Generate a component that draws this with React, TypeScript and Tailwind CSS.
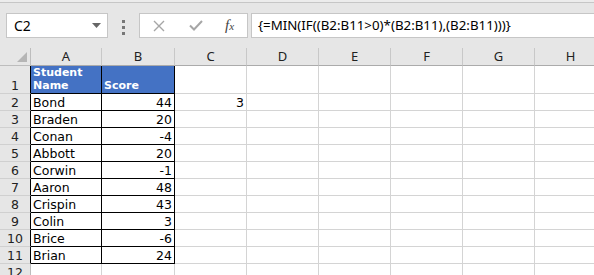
import React from 'react';

const cols = ['A', 'B', 'C', 'D', 'E', 'F', 'G', 'H'];
const widths = [71, 73, 72, 72, 72, 72, 72, 72];

const data: [string, number][] = [
  ['Bond', 44],
  ['Braden', 20],
  ['Conan', -4],
  ['Abbott', 20],
  ['Corwin', -1],
  ['Aaron', 48],
  ['Crispin', 43],
  ['Colin', 3],
  ['Brice', -6],
  ['Brian', 24],
];

const cellFont = { fontFamily: '"DejaVu Sans", Verdana, sans-serif' };
const uiFont = { fontFamily: '"Noto Sans", "Open Sans", sans-serif' };

function FormulaBar() {
  return (
    <div className="relative h-[48px] bg-[#e6e6e6]">
      <div className="h-[2px] bg-[#ececec]" />
      <div className="h-px bg-[#c6c6c6]" />
      <div className="flex items-start pt-[10px] pl-[6px]">
        {/* Name box */}
        <div className="flex h-[25px] w-[102px] items-center justify-between border border-[#c6c6c6] bg-white pl-[7px] pr-[6px]">
          <span className="text-[14px] text-black" style={uiFont}>
            C2
          </span>
          <svg width="9" height="5" viewBox="0 0 9 5">
            <path d="M0 0h9L4.5 5z" fill="#666" />
          </svg>
        </div>
        <div className="flex w-[31px] flex-col items-center gap-[3px] pt-[7px]">
          <span className="h-[3px] w-[3px] bg-[#777]" />
          <span className="h-[3px] w-[3px] bg-[#777]" />
          <span className="h-[3px] w-[3px] bg-[#777]" />
        </div>
        {/* Cancel / enter / fx */}
        <div className="flex h-[25px] w-[109px] items-center border border-[#c6c6c6] bg-white">
          <svg className="ml-[13px]" width="12" height="12" viewBox="0 0 12 12">
            <path d="M1 1l10 10M11 1L1 11" stroke="#a6a6a6" strokeWidth="1.4" />
          </svg>
          <svg className="ml-[24px]" width="14" height="11" viewBox="0 0 14 11">
            <path d="M1 5.5l4 4L13 1" stroke="#a6a6a6" strokeWidth="2" fill="none" />
          </svg>
          <span
            className="ml-[22px] text-[15px] italic text-[#444]"
            style={{ fontFamily: '"Liberation Serif", "DejaVu Serif", serif' }}
          >
            f<span className="text-[11px]">x</span>
          </span>
        </div>
        {/* Formula */}
        <div className="ml-[3px] flex h-[25px] flex-1 items-center border border-r-0 border-[#c6c6c6] bg-white pl-[6px]">
          <span className="text-[13.3px] text-black" style={uiFont}>
            {'{=MIN(IF((B2:B11>0)*(B2:B11),(B2:B11)))}'}
          </span>
        </div>
      </div>
    </div>
  );
}

function HeaderRow() {
  return (
    <div className="flex h-[18px] bg-[#e6e6e6]">
      <div className="relative w-[31px] shrink-0 border-r border-b border-[#bdbdbd]">
        <svg className="absolute right-[3px] bottom-[3px]" width="10" height="10" viewBox="0 0 10 10">
          <path d="M10 0V10H0z" fill="#b5b5b5" />
        </svg>
      </div>
      {cols.map((c, i) => (
        <div
          key={c}
          className="flex shrink-0 items-center justify-center border-r border-b border-r-[#c8c8c8] border-b-[#ababab] text-[13px] text-[#222]"
          style={{ ...uiFont, width: widths[i] }}
        >
          {c}
        </div>
      ))}
    </div>
  );
}

function RowHead({ n, h, dark }: { n: number; h: number; dark: boolean }) {
  return (
    <div
      className={`flex w-[31px] shrink-0 items-end justify-center border-r border-b border-b-[#d0d0d0] bg-[#e6e6e6] text-[12.5px] leading-[15px] text-[#222] ${
        dark ? 'border-r-black' : 'border-r-[#bdbdbd]'
      }`}
      style={{ ...cellFont, height: h }}
    >
      {n}
    </div>
  );
}

function Blank({ w, h, children }: { w: number; h: number; children?: React.ReactNode }) {
  return (
    <div
      className="flex shrink-0 items-end justify-end border-r border-b border-[#d4d4d4] pr-[2px] text-[12.5px] text-black"
      style={{ ...cellFont, width: w, height: h }}
    >
      {children}
    </div>
  );
}

export default function App() {
  return (
    <div className="h-[275px] w-[594px] overflow-hidden bg-white">
      <FormulaBar />
      <HeaderRow />

      {/* Row 1: table header */}
      <div className="flex">
        <RowHead n={1} h={28} dark />
        <div
          className="flex h-[28px] w-[71px] shrink-0 items-end border-r border-b border-black bg-[#4472c4] pb-[1px] pl-[2px] text-[11px] font-bold leading-[13px] text-white"
          style={cellFont}
        >
          Student
          <br />
          Name
        </div>
        <div
          className="flex h-[28px] w-[73px] shrink-0 items-end border-r border-b border-black bg-[#4472c4] pb-[1px] pl-[2px] text-[11px] font-bold leading-[13px] text-white"
          style={cellFont}
        >
          Score
        </div>
        {widths.slice(2).map((w, i) => (
          <Blank key={i} w={w} h={28} />
        ))}
      </div>

      {data.map(([name, score], r) => (
        <div key={name} className="flex">
          <RowHead n={r + 2} h={17} dark />
          <div
            className="flex h-[17px] w-[71px] shrink-0 items-end border-r border-b border-black pl-[2px] text-[12.5px] leading-[15px] text-black"
            style={cellFont}
          >
            {name}
          </div>
          <div
            className="flex h-[17px] w-[73px] shrink-0 items-end justify-end border-r border-b border-black pr-[2px] text-[12.5px] leading-[15px] text-black"
            style={cellFont}
          >
            {score}
          </div>
          {widths.slice(2).map((w, i) => (
            <Blank key={i} w={w} h={17}>
              {r === 0 && i === 0 ? <span className="leading-[15px]">3</span> : null}
            </Blank>
          ))}
        </div>
      ))}

      <div className="flex">
        <RowHead n={12} h={17} dark={false} />
        {widths.map((w, i) => (
          <Blank key={i} w={w} h={17} />
        ))}
      </div>
    </div>
  );
}
